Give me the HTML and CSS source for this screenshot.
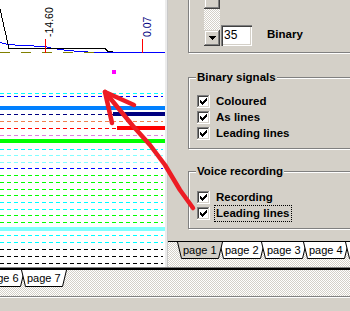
FILE: index.html
```html
<!DOCTYPE html>
<html>
<head>
<meta charset="utf-8">
<title>Signals</title>
<link rel="stylesheet" href="styles.css">
</head>
<body>
<div class="window">
  <div class="main">
    <div class="chart">
      <svg class="plot" width="165" height="267" viewBox="0 0 165 267">
        <g shape-rendering="crispEdges" fill="none">
          <polyline points="0,42.5 8,44.5 22,45.5 45,46.5 53,48.5 68,50.5 80,51.5 96,52.5 165,52.5" stroke="#0000ff"/>
          <line x1="0" y1="52.5" x2="96" y2="52.5" stroke="#808000" stroke-dasharray="10 11"/>
          <polyline points="0,9 9,48.5 105,48.5 108,51.5 113,51.5" stroke="#000"/>
          <line x1="45.5" y1="39" x2="45.5" y2="53" stroke="#ff0000"/>
          <line x1="142.5" y1="39" x2="142.5" y2="53" stroke="#ff0000"/>
        </g>
        <text class="axis" transform="translate(53 37) rotate(-90)">-14.60</text>
        <text class="axis blue" transform="translate(151 37) rotate(-90)">0.07</text>
        <rect x="112" y="70" width="4" height="4" fill="#ff00ff"/>
        <g shape-rendering="crispEdges" stroke-dasharray="4 3">
          <line x1="0" x2="163" y1="93.5" y2="93.5" stroke="#00ffff"/>
          <line x1="0" x2="163" y1="96.5" y2="96.5" stroke="#0000ff"/>
          <line x1="0" x2="163" y1="114.5" y2="114.5" stroke="#000080"/>
          <line x1="0" x2="163" y1="121.5" y2="121.5" stroke="#f08050"/>
          <line x1="0" x2="163" y1="128.5" y2="128.5" stroke="#ff0000"/>
          <line x1="0" x2="163" y1="135.5" y2="135.5" stroke="#e080e0"/>
          <line x1="0" x2="163" y1="149.5" y2="149.5" stroke="#00ffff"/>
          <line x1="0" x2="163" y1="155.5" y2="155.5" stroke="#80ffff"/>
          <line x1="0" x2="163" y1="162.5" y2="162.5" stroke="#80ffff"/>
          <line x1="0" x2="163" y1="168.5" y2="168.5" stroke="#0000ff"/>
          <line x1="0" x2="163" y1="175.5" y2="175.5" stroke="#00ff00"/>
          <line x1="0" x2="163" y1="182.5" y2="182.5" stroke="#00ff00"/>
          <line x1="0" x2="163" y1="189.5" y2="189.5" stroke="#00ff00"/>
          <line x1="0" x2="163" y1="195.5" y2="195.5" stroke="#00ff00"/>
          <line x1="0" x2="163" y1="202.5" y2="202.5" stroke="#00ffff"/>
          <line x1="0" x2="163" y1="209.5" y2="209.5" stroke="#00ffff"/>
          <line x1="0" x2="163" y1="215.5" y2="215.5" stroke="#00ff00"/>
          <line x1="0" x2="163" y1="222.5" y2="222.5" stroke="#00ff00"/>
          <line x1="0" x2="163" y1="235.5" y2="235.5" stroke="#00ffff"/>
          <line x1="0" x2="163" y1="242.5" y2="242.5" stroke="#00ffff"/>
          <line x1="0" x2="163" y1="249.5" y2="249.5" stroke="#000"/>
          <line x1="0" x2="163" y1="256.5" y2="256.5" stroke="#000"/>
          <line x1="0" x2="163" y1="263.5" y2="263.5" stroke="#000"/>
        </g>
        <g shape-rendering="crispEdges">
          <rect x="0" y="106" width="165" height="4" fill="#0080ff"/>
          <rect x="113" y="112" width="52" height="4" fill="#000080"/>
          <rect x="117" y="126" width="48" height="4" fill="#ff0000"/>
          <rect x="0" y="139" width="165" height="4" fill="#00ff00"/>
          <rect x="0" y="227" width="165" height="4" fill="#80ffff"/>
        </g>
      </svg>
    </div>
    <div class="splitter"></div>
    <div class="panel">
      <div class="group g-top">
        <div class="spin-row">
          <div class="vscroll">
            <div class="sb-thumb"></div>
            <div class="sb-track"></div>
            <div class="sb-btn">
              <svg width="7" height="4" viewBox="0 0 7 4"><path d="M0 0h7v1h-1v1h-1v1h-1v1h-1v-1h-1v-1h-1v-1h-1z" fill="#000"/></svg>
            </div>
          </div>
          <div class="edit">35</div>
          <span class="bold-label">Binary</span>
        </div>
      </div>

      <div class="group g-binary">
        <span class="legend">Binary signals</span>
        <div class="check first">
          <svg class="cb" width="13" height="13" viewBox="0 0 13 13"><path d="M0 0h12v1H1v11H0z" fill="#808080"/><path d="M1 1h10v1H2v9H1z" fill="#404040"/><path d="M12 0h1v13H0v-1h12z" fill="#fff"/><path d="M11 1h1v11H1v-1h10z" fill="#d4d0c8"/><rect x="2" y="2" width="9" height="9" fill="#fff"/><path d="M9 3h1v1h-1zM8 4h2v1h-2zM3 5h1v1h-1zM7 5h3v1h-3zM3 6h2v1h-2zM6 6h3v1h-3zM3 7h5v1h-5zM4 8h3v1h-3zM5 9h1v1h-1z" fill="#000"/></svg>
          <span class="ctext">Coloured</span>
        </div>
        <div class="check">
          <svg class="cb" width="13" height="13" viewBox="0 0 13 13"><path d="M0 0h12v1H1v11H0z" fill="#808080"/><path d="M1 1h10v1H2v9H1z" fill="#404040"/><path d="M12 0h1v13H0v-1h12z" fill="#fff"/><path d="M11 1h1v11H1v-1h10z" fill="#d4d0c8"/><rect x="2" y="2" width="9" height="9" fill="#fff"/><path d="M9 3h1v1h-1zM8 4h2v1h-2zM3 5h1v1h-1zM7 5h3v1h-3zM3 6h2v1h-2zM6 6h3v1h-3zM3 7h5v1h-5zM4 8h3v1h-3zM5 9h1v1h-1z" fill="#000"/></svg>
          <span class="ctext">As lines</span>
        </div>
        <div class="check">
          <svg class="cb" width="13" height="13" viewBox="0 0 13 13"><path d="M0 0h12v1H1v11H0z" fill="#808080"/><path d="M1 1h10v1H2v9H1z" fill="#404040"/><path d="M12 0h1v13H0v-1h12z" fill="#fff"/><path d="M11 1h1v11H1v-1h10z" fill="#d4d0c8"/><rect x="2" y="2" width="9" height="9" fill="#fff"/><path d="M9 3h1v1h-1zM8 4h2v1h-2zM3 5h1v1h-1zM7 5h3v1h-3zM3 6h2v1h-2zM6 6h3v1h-3zM3 7h5v1h-5zM4 8h3v1h-3zM5 9h1v1h-1z" fill="#000"/></svg>
          <span class="ctext">Leading lines</span>
        </div>
      </div>

      <div class="group g-voice">
        <span class="legend">Voice recording</span>
        <div class="check first">
          <svg class="cb" width="13" height="13" viewBox="0 0 13 13"><path d="M0 0h12v1H1v11H0z" fill="#808080"/><path d="M1 1h10v1H2v9H1z" fill="#404040"/><path d="M12 0h1v13H0v-1h12z" fill="#fff"/><path d="M11 1h1v11H1v-1h10z" fill="#d4d0c8"/><rect x="2" y="2" width="9" height="9" fill="#fff"/><path d="M9 3h1v1h-1zM8 4h2v1h-2zM3 5h1v1h-1zM7 5h3v1h-3zM3 6h2v1h-2zM6 6h3v1h-3zM3 7h5v1h-5zM4 8h3v1h-3zM5 9h1v1h-1z" fill="#000"/></svg>
          <span class="ctext">Recording</span>
        </div>
        <div class="check">
          <svg class="cb" width="13" height="13" viewBox="0 0 13 13"><path d="M0 0h12v1H1v11H0z" fill="#808080"/><path d="M1 1h10v1H2v9H1z" fill="#404040"/><path d="M12 0h1v13H0v-1h12z" fill="#fff"/><path d="M11 1h1v11H1v-1h10z" fill="#d4d0c8"/><rect x="2" y="2" width="9" height="9" fill="#fff"/><path d="M9 3h1v1h-1zM8 4h2v1h-2zM3 5h1v1h-1zM7 5h3v1h-3zM3 6h2v1h-2zM6 6h3v1h-3zM3 7h5v1h-5zM4 8h3v1h-3zM5 9h1v1h-1z" fill="#000"/></svg>
          <span class="ctext focus">Leading lines</span>
        </div>
      </div>

      <div class="tabstrip right-tabs">
        <div class="tab active"><svg class="tabshape" viewBox="0 0 46 17" preserveAspectRatio="none"><path d="M0.5 0 L4.5 16.5 L41.5 16.5 L45.5 0" fill="#d4d0c8" stroke="#000"/></svg><span class="tlabel">page 1</span></div>
        <div class="tab"><svg class="tabshape" viewBox="0 0 46 17" preserveAspectRatio="none"><path d="M0.5 0 L4.5 16.5 L41.5 16.5 L45.5 0" fill="#fff" stroke="#000"/></svg><span class="tlabel">page 2</span></div>
        <div class="tab"><svg class="tabshape" viewBox="0 0 46 17" preserveAspectRatio="none"><path d="M0.5 0 L4.5 16.5 L41.5 16.5 L45.5 0" fill="#fff" stroke="#000"/></svg><span class="tlabel">page 3</span></div>
        <div class="tab"><svg class="tabshape" viewBox="0 0 46 17" preserveAspectRatio="none"><path d="M0.5 0 L4.5 16.5 L41.5 16.5 L45.5 0" fill="#fff" stroke="#000"/></svg><span class="tlabel">page 4</span></div>
        <div class="tab"><svg class="tabshape" viewBox="0 0 46 17" preserveAspectRatio="none"><path d="M0.5 0 L4.5 16.5 L41.5 16.5 L45.5 0" fill="#fff" stroke="#000"/></svg></div>
      </div>
    </div>
  </div>

  <div class="bottom">
    <div class="tabstrip bottom-tabs">
      <div class="tab"><svg class="tabshape" viewBox="0 0 46 17" preserveAspectRatio="none"><path d="M0.5 0 L4.5 16.5 L41.5 16.5 L45.5 0" fill="#fff" stroke="#000"/></svg><span class="tlabel">page 6</span></div>
      <div class="tab"><svg class="tabshape" viewBox="0 0 46 17" preserveAspectRatio="none"><path d="M0.5 0 L4.5 16.5 L41.5 16.5 L45.5 0" fill="#fff" stroke="#000"/></svg><span class="tlabel">page 7</span></div>
    </div>
    <div class="statusline"></div>
  </div>

  <svg class="arrow" width="350" height="311" viewBox="0 0 350 311">
    <g fill="none" stroke="#ed1c24" stroke-width="4.5" stroke-linecap="round" stroke-linejoin="round">
      <polyline points="193,208 180,190 165,165 150,145 133,126 105,92"/>
      <polyline points="134,105 105,92 112,123"/>
    </g>
  </svg>
</div>
</body>
</html>
```

FILE: styles.css
```css
* { box-sizing: border-box; }
html, body { margin: 0; padding: 0; }
body {
  width: 350px;
  height: 311px;
  overflow: hidden;
  background: #d4d0c8;
  font-family: "Liberation Sans", Arial, sans-serif;
  font-size: 11px;
  color: #000;
}
.window {
  position: relative;
  width: 350px;
  height: 311px;
  display: flex;
  flex-direction: column;
  overflow: hidden;
}
.main {
  display: flex;
  height: 267px;
  flex: none;
}
.chart {
  width: 165px;
  height: 267px;
  background: #fff;
  flex: none;
}
.plot { display: block; }
.axis {
  font-family: "Liberation Sans", Arial, sans-serif;
  font-size: 10.5px;
  fill: #000;
}
.axis.blue { fill: #000080; }

.splitter {
  width: 3px;
  flex: none;
  background: #ececec;
  border-right: 1px solid #c8c8c8;
}
.panel {
  flex: 1;
  display: flex;
  flex-direction: column;
  padding-left: 20px;
  overflow: hidden;
}

/* etched group box */
.group {
  flex: none;
  width: 210px;
  border: 1px solid #808080;
  box-shadow: inset 1px 1px #fff, 1px 1px #fff;
}
.g-top {
  margin-top: -21px;
  height: 74px;
  padding: 0 0 6px 15px;
  display: flex;
  align-items: flex-end;
}
.spin-row {
  display: flex;
  align-items: flex-end;
}
.vscroll {
  width: 16px;
  display: flex;
  flex-direction: column;
}
.sb-thumb, .sb-btn {
  background: #d4d0c8;
  box-shadow: inset -1px -1px #404040, inset 1px 1px #d4d0c8, inset -2px -2px #808080, inset 2px 2px #fff;
}
.sb-thumb { height: 29px; }
.sb-track {
  height: 21px;
  background-color: #fff;
  background-image: repeating-conic-gradient(#d4d0c8 0 25%, #fff 0 50%);
  background-size: 2px 2px;
}
.sb-btn {
  height: 16px;
  display: flex;
  align-items: center;
  justify-content: center;
}
.sb-btn svg { display: block; }
.edit {
  width: 31px;
  height: 21px;
  margin-left: 1px;
  background: #fff;
  box-shadow: inset 1px 1px #808080, inset 2px 2px #404040, inset -1px -1px #fff, inset -2px -2px #d4d0c8;
  padding: 3px 0 0 3px;
  font-size: 12px;
  line-height: 14px;
}
.bold-label {
  margin-left: 15px;
  margin-bottom: 5px;
  font-weight: bold;
  font-size: 11.5px;
  line-height: 13px;
}

.g-binary {
  margin-top: 24px;
  height: 72px;
  padding: 0 0 0 8px;
  display: flex;
  flex-direction: column;
}
.g-voice {
  margin-top: 22px;
  height: 58px;
  padding: 0 0 0 8px;
  display: flex;
  flex-direction: column;
}
.legend {
  align-self: flex-start;
  margin-top: -7px;
  margin-left: -1px;
  padding: 0 1px;
  height: 13px;
  background: #d4d0c8;
  font-weight: bold;
  font-size: 11.5px;
  line-height: 13px;
}
.check {
  display: flex;
  align-items: flex-start;
  height: 16px;
  flex: none;
}
.g-binary .check.first { margin-top: 10px; }
.g-voice .check.first { margin-top: 12px; }
.cb {
  display: block;
  margin-top: 1px;
  flex: none;
}
.ctext {
  margin-left: 6px;
  font-weight: bold;
  font-size: 11.5px;
  line-height: 15px;
}
.ctext.focus {
  margin-left: 4px;
  margin-top: -1px;
  padding: 0 1px;
  border: 1px dotted #000;
  line-height: 15px;
  height: 17px;
}

/* tab sets (tabs at the bottom) */
.tabstrip {
  display: flex;
  align-items: flex-start;
  background-color: #fff;
  background-image: repeating-conic-gradient(#d4d0c8 0 25%, #fff 0 50%);
  background-size: 2px 2px;
}
.right-tabs {
  margin-top: 12px;
  margin-left: -21px;
  flex: 1;
  padding-left: 10px;
  border-top: 1px solid #000;
}
.tab {
  position: relative;
  flex: none;
  width: 46px;
  height: 17px;
  margin-right: -4px;
  display: flex;
  justify-content: flex-start;
  align-items: center;
  padding-left: 6px;
}
.tab.active { z-index: 2; }
.tabshape {
  position: absolute;
  left: 0;
  top: 0;
  width: 100%;
  height: 100%;
}
.tlabel {
  position: relative;
  font-size: 11px;
  line-height: 13px;
}

.bottom {
  flex: 1;
  display: flex;
  flex-direction: column;
}
.bottom-tabs {
  height: 29px;
  flex: none;
  margin-left: -21px;
  border-top: 1px solid #808080;
  box-shadow: inset 0 2px #000;
  padding-top: 2px;
}
.statusline {
  flex: 1;
  border-top: 1px solid #808080;
  box-shadow: inset 0 1px #fff;
}

.arrow {
  position: absolute;
  left: 0;
  top: 0;
  pointer-events: none;
}
```
